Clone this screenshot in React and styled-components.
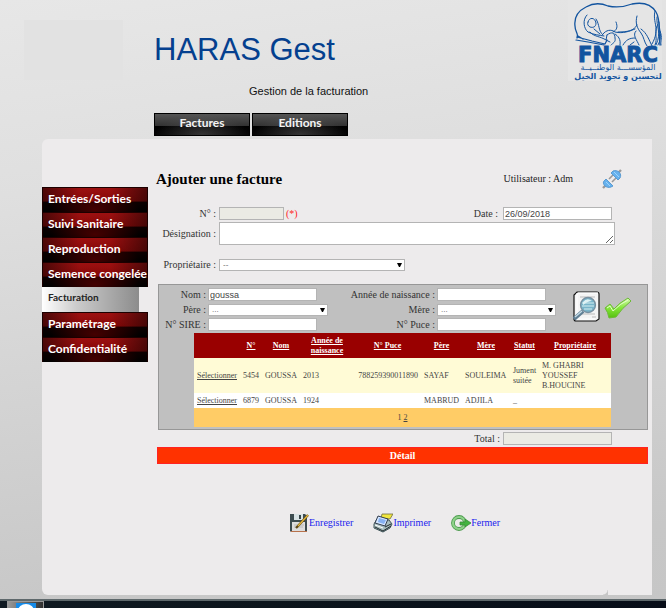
import React from "react";
import styled, { createGlobalStyle, css } from "styled-components";

const SERIF = '"Liberation Serif", "Times New Roman", serif';
const SANS = '"Liberation Sans", Arial, sans-serif';
const MENU = 'Lato, "Open Sans", sans-serif';

const GlobalStyle = createGlobalStyle`
  *, *::before, *::after { box-sizing: border-box; }
  body { margin: 0; background: #c8c8c8; color: #333; font: 10px/12px ${SERIF}; }
`;

const Page = styled.div`
  min-height: 100vh;
  display: flex;
  flex-direction: column;
  background: linear-gradient(172deg, #e7e7e7 0%, #dfdfdf 28%, #c7c7c7 88%, #c6c6c6 100%);
`;

const Header = styled.header`
  display: flex;
  justify-content: space-between;
  align-items: flex-start;
  height: 139px;
  padding: 0 4px 0 24px;
`;

const EmblemSpace = styled.div`
  width: 99px;
  height: 60px;
  margin-top: 20px;
  background: #e2e2e2;
`;

const Brand = styled.div`
  flex: 1;
  padding: 32px 0 0 31px;
`;

const AppName = styled.h1`
  margin: 0;
  font: 400 31px/36px ${SANS};
  color: #04408f;
`;

const Section = styled.p`
  margin: 16px 0 15px 95px;
  font: 11px/14px ${SANS};
  color: #111;
`;

const TopNav = styled.nav`
  display: flex;
  gap: 2px;
`;

const TopLink = styled.a`
  width: 96px;
  height: 23px;
  font: 700 12px/17px ${MENU};
  text-align: center;
  text-decoration: none;
  color: #f4f4f4;
  border: 1px solid #000;
  background:
    radial-gradient(ellipse at 50% 100%, rgba(110, 110, 110, 0.45), transparent 70%),
    linear-gradient(#555 0, #333 55%, #000 56%, #060606 100%);
`;

const LogoBox = styled.div`
  width: 94px;
  height: 81px;
  background: #e5e5e5;
`;

const Panel = styled.div`
  position: relative;
  display: flex;
  gap: 8px;
  flex: 1;
  margin: 0 14px 4px 42px;
  padding-right: 4px;
  background: #edebec;
  border-radius: 6px 0 0 6px;
  &::after {
    content: "";
    position: absolute;
    right: 44px;
    bottom: 0;
    width: 5px;
    height: 5px;
    background: radial-gradient(circle at 0 0, transparent 4px, #c6c6c6 5px);
  }
`;

const SideNav = styled.nav`
  width: 106px;
  padding-top: 48px;
  flex: none;
`;

const SideLink = styled.a`
  display: block;
  height: 25px;
  padding-left: 6px;
  text-decoration: none;
  white-space: nowrap;
  ${(p) =>
    p.$active
      ? css`
          width: 97px;
          font: 700 10px/21px ${MENU};
          color: #222;
          background: linear-gradient(90deg, #fff, #ccc 35%, #8c8c8c);
        `
      : css`
          font: 700 12px/22px ${MENU};
          color: #fff;
          border: 1px solid #1c0000;
          border-width: 1px 1px 0;
          padding-left: 5px;
          background:
            radial-gradient(ellipse at 50% 90%, rgba(120, 0, 0, 0.55), transparent 60%),
            linear-gradient(90deg, rgba(0, 0, 0, 0.5), transparent 35% 65%, rgba(0, 0, 0, 0.5)),
            linear-gradient(#9c1010 0, #8a0a0a 55%, #160000 58%, #000 100%);
        `}
`;

const Main = styled.main`
  flex: 1;
  min-width: 0;
  padding-top: 30px;
`;

const TitleRow = styled.div`
  display: flex;
  align-items: center;
  height: 20px;
  padding-right: 26px;
  color: #222;
`;

const Title = styled.h2`
  flex: 1;
  margin: 0;
  font: 700 15px/20px ${SERIF};
  color: #000;
`;

const Plug = styled.button`
  display: block;
  width: 20px;
  height: 20px;
  margin-left: 29px;
  padding: 0;
  border: 0;
  background: none;
`;

const Row = styled.div`
  display: flex;
  align-items: center;
  margin-top: ${(p) => p.$top || 0}px;
  padding: 0 36px 0 2px;
`;

const Label = styled.label`
  width: ${(p) => (p.$w ? p.$w + "px" : "auto")};
  margin-right: ${(p) => p.$gap || 0}px;
  text-align: right;
  white-space: nowrap;
`;

const field = css`
  border: 1px solid #b4b4b4;
  border-radius: 0;
  background: #fff;
  font: 9px/11px ${SANS};
  color: #444;
  outline: 0;
`;

const Input = styled.input`
  ${field}
  width: ${(p) => p.$w}px;
  height: 13px;
  padding: 0 1px;
  &:read-only { background: #ebebe4; }
`;

const Area = styled.textarea`
  ${field}
  flex: 1;
  height: 23px;
  margin-right: -3px;
  padding: 1px;
  resize: both;
`;

const Required = styled.span`
  flex: 1;
  padding-left: 2px;
  color: #f22;
`;

const SelectBox = styled.span`
  position: relative;
  display: block;
  width: ${(p) => p.$w}px;
  height: 12px;
  svg { position: absolute; right: 2px; top: 3px; pointer-events: none; }
`;

const SelectField = styled.select`
  ${field}
  appearance: none;
  display: block;
  width: 100%;
  height: 12px;
  padding: 0 3px;
  font: 8px/10px ${SANS};
  color: #666;
`;

const Search = styled.section`
  margin: 13px 0 0 2px;
  padding: 2px 0 2px;
  border: 1px solid #979797;
  background: #c0c0c0;
`;

const SearchTop = styled.div`
  display: flex;
`;

const Fields = styled.div`
  flex: 1;
  display: grid;
  grid-template-columns: 47px 120px 1fr 119px;
  grid-auto-rows: 15px;
  align-items: center;
  column-gap: 2px;
`;

const Tools = styled.div`
  display: flex;
  align-items: flex-start;
  gap: 3px;
  width: 91px;
  padding: 4px 0 0 17px;
`;

const ToolButton = styled.button`
  display: block;
  width: 28px;
  height: 32px;
  padding: 0;
  border: 0;
  background: none;
`;

const TableWrap = styled.div`
  padding: 1px 36px 0 35px;
`;

const Table = styled.table`
  width: 100%;
  table-layout: fixed;
  border-collapse: collapse;
  font: 8px/10px ${SERIF};
  color: #444;
  a { color: inherit; text-decoration: underline; }
  th { height: 25px; padding: 0 2px; color: #fff; background: #900; }
  td { height: 15px; padding: 0 3px; white-space: nowrap; }
  tbody tr:nth-child(odd) { background: #fffbd6; }
  tbody tr:nth-child(odd) td { height: 35px; }
  tbody tr:nth-child(even) { background: #fff; }
  tfoot td { height: 19px; text-align: center; background: #fc6; }
`;

const NumberCell = styled.td`
  text-align: right;
`;

const Detail = styled.h3`
  margin: 2px 0 0 1px;
  border: 1px solid #f22;
  background: #ff3200;
  font: 700 10px/15px ${SERIF};
  text-align: center;
  color: #fff;
`;

const Actions = styled.div`
  display: flex;
  justify-content: center;
  gap: 20px;
  margin-top: 49px;
  padding-right: 14px;
`;

const Action = styled.a`
  display: flex;
  align-items: center;
  height: 20px;
  color: #22e;
  text-decoration: none;
`;

const Taskbar = styled.footer`
  height: 9px;
  padding-left: 7px;
  border-top: 2px solid #5e686b;
  background: linear-gradient(90deg, #101a22, #0c151c 40%, #070d18);
`;

const TaskButton = styled.button`
  display: block;
  width: 37px;
  height: 7px;
  padding: 0;
  border: 1px solid #999;
  border-bottom: 0;
  overflow: hidden;
  background: linear-gradient(90deg, #999, #666 50%, #303030);
  svg { display: block; margin: 0 auto 0 8px; }
`;

function Logo() {
  return (
    <svg width="94" height="81" viewBox="568 0 94 81" role="img" aria-label="FNARC">
      <g fill="none" stroke="#12549f" strokeWidth="1" strokeLinecap="round" strokeLinejoin="round">
        <path d="M577 38 C579 34 575 32 575 26 C574 18 578 11 586 7 C593 3 601 3 608 6 C617 8 624 7 632 4 C642 2 651 4 656 12 C661 20 658 29 660 45" strokeWidth="1.3" />
        <path d="M577 37 L592 41 L605 44 L607 40 M576 40 L588 42 L604 45 M578 36 L583 39" strokeWidth="1.2" />
        <path d="M587 15 C582 20 584 29 588 32 C594 35 599 35 604 36 M588 22 C589 17 595 17 596 23 C596 27 593 28 590 27 C588 26 587 24 588 22 M596 19 C600 25 598 31 603 35 M594 29 L600 34 M590 32 C594 37 600 36 606 40" />
        <path d="M603 34 C606 30 611 29 615 32 C623 34 630 31 635 29 M607 35 C612 31 615 33 615 38 C616 42 613 43 611 45 M607 35 L606 40 L610 42 M615 34 C618 36 621 39 620 45 M623 45 C626 40 629 38 635 38 M636 31 C632 35 637 40 639 45 M634 42 L630 45" />
        <path d="M616 22 C618 27 617 30 613 32 M637 16 C635 23 637 28 641 33 C644 37 644 42 647 46 M641 29 C647 33 649 40 652 46 M618 32 C627 32 634 31 637 25" />
        <path d="M655 11 C652 23 661 28 652 44 M657 17 C656 27 662 32 656 45 M659 22 C659 31 663 36 658 45 M657 26 C654 34 658 38 655 45 M660 31 C663 38 660 41 661 45" />
      </g>
      <g fill="#12549f" fontFamily='"DejaVu Sans", sans-serif' fontWeight="700" textAnchor="middle">
        <text x="618" y="62" fontSize="21" stroke="#12549f" strokeWidth="1">FNARC</text>
        <text x="618" y="70" fontSize="8" fontWeight="400" direction="rtl">المؤسســـة الوطنــيــة</text>
        <text x="618" y="79" fontSize="8" direction="rtl">لتحسين و تجويد الخيل</text>
      </g>
    </svg>
  );
}

const PlugIcon = () => (
  <svg width="20" height="20" viewBox="0 0 20 20">
    <path d="M1 19 L5 15 M15 5 L19 1" stroke="#999" strokeWidth="2.4" />
    <path d="M7 10 L11 6 M10 13 L14 9" stroke="#999" strokeWidth="1.6" />
    <path d="M2 12 L4 10 L11 17 L9 18 C7 19 4 18 3 17 C1 15 1 13 2 12 Z" fill="#66b1ed" stroke="#5b9bd2" />
    <path d="M9 4 L11 2 C13 1 16 2 17 3 C19 5 19 7 18 9 L16 11 Z" fill="#66b1ed" stroke="#5b9bd2" />
    <path d="M4 13 L8 17 M12 3 L17 8" stroke="#9fd3fb" />
  </svg>
);

const SearchIcon = () => (
  <svg width="28" height="32" viewBox="0 0 28 32">
    <path d="M4 1 H24 Q26 1 26 3 V28 L23 30 H3 Q1 30 1 28 V4 Z" fill="#f4f4f4" stroke="#111" strokeWidth="1.2" />
    <path d="M4 2 V28 H22 M5 2 H25" stroke="#fff" fill="none" />
    <path d="M7 6 H22 M8 23 H22 M19 26 H23" stroke="#bbb" />
    <path d="M10 20 L1 28" stroke="#607f94" strokeWidth="4" />
    <path d="M9 20 L2 26" stroke="#c4dbe6" strokeWidth="1.4" />
    <circle cx="15" cy="14" r="7.5" fill="#79b5ca" stroke="#7890a0" strokeWidth="1.3" />
    <path d="M9 12 H21 M9 15 H21 M11 18 H19" stroke="#b7dce5" strokeWidth="1.3" />
    <path d="M10 11 Q14 6 19 10 Q15 10 10 14 Z" fill="#dff2f5" />
  </svg>
);

const TickIcon = () => (
  <svg width="28" height="32" viewBox="0 0 28 32">
    <defs>
      <linearGradient id="tick" x2="0" y2="1">
        <stop offset="0" stopColor="#d8fbb3" />
        <stop offset=".5" stopColor="#84e63a" />
        <stop offset="1" stopColor="#55c010" />
      </linearGradient>
    </defs>
    <path d="M1 17 L6 13 L10 18 Q15 12 24 7 L27 10 Q18 17 12 26 L5 27 Q4 21 1 17 Z" fill="url(#tick)" stroke="#6cba36" strokeLinejoin="round" />
    <path d="M3 17 L6 15 L9 20 Q17 12 24 9" fill="none" stroke="#e4ffc9" />
  </svg>
);

const SaveIcon = () => (
  <svg width="19" height="20" viewBox="0 0 19 20">
    <path d="M0 1 H15 L17 3 V19 H1 L0 18 Z" fill="#3d4c50" />
    <path d="M4 1 H13 V7 H4 Z" fill="#d8e3e5" />
    <path d="M9 2 H11 V6 H9 Z" fill="#38464a" />
    <path d="M2 9 H15 V18 H2 Z" fill="#ddd" />
    <path d="M4 12 H14 M4 14 H13" stroke="#bbb" />
    <path d="M1 18 H17 V19 H1 Z" fill="#b8724c" />
    <path d="M18 2 L8 13 L6 15" fill="none" stroke="#604815" strokeWidth="2.4" />
    <path d="M18 2 L8 13" stroke="#e5b83d" strokeWidth="1.2" />
  </svg>
);

const PrintIcon = () => (
  <svg width="20" height="20" viewBox="0 0 20 20">
    <path d="M1 11 L4 6 L16 7 L19 11 L17 15 L10 19 L1 15 Z" fill="#a9bebe" stroke="#3e5358" />
    <path d="M9 1 H20 L17 6 L8 5 Z" fill="#f1e63d" stroke="#6e6d43" strokeWidth=".8" />
    <path d="M5 3 L15 6 L12 13 L2 10 Z" fill="#d4e6ff" stroke="#333d4c" />
    <path d="M6 5 L13 7 L11 11 L5 9 Z" fill="#86b1f2" />
    <path d="M2 14 L10 18 L18 13 M12 14 L18 11" fill="none" stroke="#20292c" />
    <path d="M2 12 L10 15" stroke="#fff" />
  </svg>
);

const CloseIcon = () => (
  <svg width="20" height="20" viewBox="0 0 20 20">
    <circle cx="8" cy="10" r="6" fill="none" stroke="#4a9a4c" strokeWidth="3.8" />
    <circle cx="8" cy="10" r="6" fill="none" stroke="#8fd28a" strokeWidth="2.2" />
    <path d="M9 9 H14 V6 L20 10 L14 14 V12 H9 Z" fill="#42b340" stroke="#378e39" strokeWidth=".8" />
  </svg>
);

function Select({ id, width, text }) {
  return (
    <SelectBox $w={width}>
      <SelectField id={id}>
        <option>{text}</option>
      </SelectField>
      <svg width="6" height="6" viewBox="0 0 6 6">
        <path d="M0 1 H5 L3 5 H2 Z" fill="#000" />
      </svg>
    </SelectBox>
  );
}

const MENU_ITEMS = [
  "Entrées/Sorties",
  "Suivi Sanitaire",
  "Reproduction",
  "Semence congelée",
  "Facturation",
  "Paramétrage",
  "Confidentialité",
];

const COLUMNS = [
  ["", 46], ["N°", 22], ["Nom", 38], ["Année de naissance", 54], ["N° Puce", 67],
  ["Père", 41], ["Mère", 48], ["Statut", 29], ["Propriétaire", 72],
];

const HORSES = [
  { no: 5454, name: "GOUSSA", year: 2013, chip: "788259390011890", sire: "SAYAF", dam: "SOULEIMA", status: ["Jument", "suitée"], owner: ["M. GHABRI", "YOUSSEF", "B.HOUCINE"] },
  { no: 6879, name: "GOUSSA", year: 1924, chip: "", sire: "MABRUD", dam: "ADJILA", status: ["_"], owner: [] },
];

const Lines = ({ of }) => of.map((line, i) => (
  <React.Fragment key={line}>{i > 0 && <br />}{line}</React.Fragment>
));

function Results() {
  return (
    <Table>
      <colgroup>
        {COLUMNS.map(([name, w]) => <col key={name} width={`${(w / 417) * 100}%`} />)}
      </colgroup>
      <thead>
        <tr>{COLUMNS.map(([name]) => <th key={name} scope="col">{name && <a href="#tri">{name}</a>}</th>)}</tr>
      </thead>
      <tbody>
        {HORSES.map((h) => (
          <tr key={h.no}>
            <td><a href="#selection">Sélectionner</a></td>
            <td>{h.no}</td>
            <td>{h.name}</td>
            <td>{h.year}</td>
            <NumberCell>{h.chip}</NumberCell>
            <td>{h.sire}</td>
            <td>{h.dam}</td>
            <td><Lines of={h.status} /></td>
            <td><Lines of={h.owner} /></td>
          </tr>
        ))}
      </tbody>
      <tfoot>
        <tr><td colSpan={9}>1 <a href="#page2">2</a></td></tr>
      </tfoot>
    </Table>
  );
}

export default function App() {
  return (
    <Page>
      <GlobalStyle />
      <Header>
        <EmblemSpace />
        <Brand>
          <AppName>HARAS Gest</AppName>
          <Section>Gestion de la facturation</Section>
          <TopNav>
            <TopLink href="#factures">Factures</TopLink>
            <TopLink href="#editions">Editions</TopLink>
          </TopNav>
        </Brand>
        <LogoBox><Logo /></LogoBox>
      </Header>

      <Panel>
        <SideNav>
          {MENU_ITEMS.map((item) => (
            <SideLink key={item} href="#menu" $active={item === "Facturation"}>{item}</SideLink>
          ))}
        </SideNav>

        <Main>
          <TitleRow>
            <Title>Ajouter une facture</Title>
            <span>Utilisateur : Adm</span>
            <Plug aria-label="Déconnexion"><PlugIcon /></Plug>
          </TitleRow>

          <Row $top={18}>
            <Label htmlFor="numero" $w={58} $gap={3}>N° :</Label>
            <Input id="numero" $w={65} readOnly />
            <Required>(*)</Required>
            <Label htmlFor="date" $gap={5}>Date :</Label>
            <Input id="date" $w={109} defaultValue="26/09/2018" />
          </Row>
          <Row $top={2}>
            <Label htmlFor="designation" $w={58} $gap={3}>Désignation :</Label>
            <Area id="designation" />
          </Row>
          <Row $top={14}>
            <Label htmlFor="proprietaire" $w={58} $gap={3}>Propriétaire :</Label>
            <Select id="proprietaire" width={186} text="--" />
          </Row>

          <Search>
            <SearchTop>
              <Fields>
                <Label htmlFor="nom">Nom :</Label>
                <Input id="nom" $w={109} defaultValue="goussa" />
                <Label htmlFor="annee">Année de naissance :</Label>
                <Input id="annee" $w={109} />
                <Label htmlFor="pere">Père :</Label>
                <Select id="pere" width={120} text="..." />
                <Label htmlFor="mere">Mère :</Label>
                <Select id="mere" width={119} text="..." />
                <Label htmlFor="sire">N° SIRE :</Label>
                <Input id="sire" $w={109} />
                <Label htmlFor="puce">N° Puce :</Label>
                <Input id="puce" $w={109} />
              </Fields>
              <Tools>
                <ToolButton aria-label="Rechercher"><SearchIcon /></ToolButton>
                <ToolButton aria-label="Valider"><TickIcon /></ToolButton>
              </Tools>
            </SearchTop>
            <TableWrap><Results /></TableWrap>
          </Search>

          <Row $top={2}>
            <Required />
            <Label htmlFor="total" $gap={3}>Total :</Label>
            <Input id="total" $w={109} readOnly />
          </Row>
          <Detail>Détail</Detail>

          <Actions>
            <Action href="#enregistrer"><SaveIcon />Enregistrer</Action>
            <Action href="#imprimer"><PrintIcon />Imprimer</Action>
            <Action href="#fermer"><CloseIcon />Fermer</Action>
          </Actions>
        </Main>
      </Panel>

      <Taskbar>
        <TaskButton aria-label="TeamViewer">
          <svg width="20" height="7" viewBox="0 0 20 7">
            <rect y="1" width="20" height="6" fill="#168be8" />
            <ellipse cx="10" cy="9" rx="8" ry="7" fill="#fff" />
          </svg>
        </TaskButton>
      </Taskbar>
    </Page>
  );
}
